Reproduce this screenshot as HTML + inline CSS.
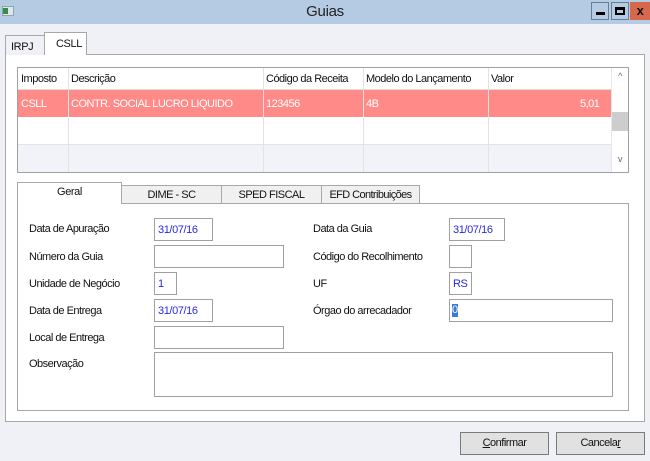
<!DOCTYPE html>
<html><head><meta charset="utf-8"><style>
*{margin:0;padding:0;box-sizing:border-box}
body{width:650px;height:461px;overflow:hidden;background:#f0f1f7;font-family:"Liberation Sans",sans-serif;font-size:11px;color:#111;position:relative;letter-spacing:-0.4px}
.a{position:absolute}
.box{position:absolute;background:#fff;border:1px solid #a0a0a0}
.lbl{position:absolute;font-size:11px;letter-spacing:-0.5px}
.val{color:#2a2ae0;padding-left:3px;padding-top:1px;line-height:21px;font-size:11px}
.col{position:absolute;top:0;bottom:0;border-left:1px solid #e3e3e3}
</style></head><body>
<div class="a" style="left:0;top:0;width:650px;height:24px;background:#b5cbe4"></div>
<div class="a" style="left:2px;top:6px;width:12px;height:10px;background:#dfe7ee;border:1px solid #8aa"></div>
<div class="a" style="left:3px;top:8px;width:5px;height:6px;background:#3a8a4a"></div>
<div class="a" style="left:0;top:3px;width:650px;text-align:center;font-size:15px;color:#222;letter-spacing:-0.3px">Guias</div>
<div class="a" style="left:591px;top:2px;width:18px;height:18px;background:#b5cbe4;border:1px solid #6a7e98"><div class="a" style="left:4px;top:9px;width:9px;height:3px;background:#000"></div></div>
<div class="a" style="left:611px;top:2px;width:18px;height:18px;background:#b5cbe4;border:1px solid #6a7e98"><div class="a" style="left:3px;top:4px;width:10px;height:8px;border:2px solid #000;border-top-width:3px"></div></div>
<div class="a" style="left:630px;top:2px;width:20px;height:18px;background:#d6684e;text-align:center;font-weight:bold;font-size:13px;line-height:17px">x</div>

<div class="a" style="left:5px;top:54px;width:640px;height:368px;border:1px solid #a8a8a8;background:#fff"></div>
<div class="a" style="left:5px;top:35px;width:40px;height:20px;border:1px solid #a8a8a8;border-bottom:none;background:#f0f1f7;padding:5px 0 0 5px">IRPJ</div>
<div class="a" style="left:44px;top:32px;width:43px;height:23px;border:1px solid #a8a8a8;border-bottom:none;background:#fff;padding:5px 0 0 11px">CSLL</div>

<div class="a" style="left:17px;top:67px;width:612px;height:106px;border:1px solid #a0a0a0;background:#fff;overflow:hidden">
 <div class="a" style="left:0;top:0;width:593px;height:22px;background:#fff;border-bottom:1px solid #ddd"></div>
 <div class="a" style="left:0;top:22px;width:593px;height:27px;background:#ff8a88"></div>
 <div class="a" style="left:0;top:49px;width:593px;height:28px;border-bottom:1px solid #e3e3e3"></div>
 <div class="a" style="left:0;top:77px;width:593px;height:28px;background:#f2f3f8"></div>
 <div class="col" style="left:50px"></div><div class="col" style="left:245px"></div><div class="col" style="left:345px"></div><div class="col" style="left:470px"></div>
 <div class="lbl" style="left:3px;top:5px">Imposto</div>
 <div class="lbl" style="left:53px;top:5px">Descrição</div>
 <div class="lbl" style="left:248px;top:5px">Código da Receita</div>
 <div class="lbl" style="left:348px;top:5px">Modelo do Lançamento</div>
 <div class="lbl" style="left:473px;top:5px">Valor</div>
 <div class="lbl" style="left:3px;top:30px;color:#fff">CSLL</div>
 <div class="lbl" style="left:53px;top:30px;color:#fff">CONTR. SOCIAL LUCRO LIQUIDO</div>
 <div class="lbl" style="left:248px;top:30px;color:#fff">123456</div>
 <div class="lbl" style="left:348px;top:30px;color:#fff">4B</div>
 <div class="lbl" style="left:562px;top:30px;color:#fff">5,01</div>
 <div class="a" style="left:593px;top:0;width:17px;height:104px;background:#fff;border-left:1px solid #e6e6e6"></div>
 <div class="a" style="left:594px;top:3px;width:16px;text-align:center;font-size:9px;color:#666">^</div>
 <div class="a" style="left:594px;top:44px;width:16px;height:19px;background:#cdcdcd"></div>
 <div class="a" style="left:594px;top:86px;width:16px;text-align:center;font-size:9px;color:#666">v</div>
</div>

<div class="a" style="left:17px;top:203px;width:612px;height:208px;border:1px solid #a8a8a8;background:#fff"></div>
<div class="a" style="left:121px;top:185px;width:101px;height:19px;border:1px solid #a8a8a8;background:#f0f0f0;text-align:center;padding-top:3px;letter-spacing:-0.5px">DIME - SC</div>
<div class="a" style="left:221px;top:185px;width:101px;height:19px;border:1px solid #a8a8a8;background:#f0f0f0;text-align:center;padding-top:3px;letter-spacing:-0.5px">SPED FISCAL</div>
<div class="a" style="left:321px;top:185px;width:99px;height:19px;border:1px solid #a8a8a8;background:#f0f0f0;text-align:center;padding-top:3px;letter-spacing:-0.6px">EFD Contribuições</div>
<div class="a" style="left:17px;top:182px;width:105px;height:22px;border:1px solid #a8a8a8;border-bottom:none;background:#fff;text-align:center;padding-top:3px">Geral</div>

<div class="lbl" style="left:29px;top:223px">Data de Apuração</div>
<div class="lbl" style="left:29px;top:251px">Número da Guia</div>
<div class="lbl" style="left:29px;top:278px">Unidade de Negócio</div>
<div class="lbl" style="left:29px;top:305px">Data de Entrega</div>
<div class="lbl" style="left:29px;top:332px">Local de Entrega</div>
<div class="lbl" style="left:29px;top:358px">Observação</div>
<div class="box val" style="left:154px;top:218px;width:59px;height:23px">31/07/16</div>
<div class="box" style="left:154px;top:245px;width:130px;height:23px"></div>
<div class="box val" style="left:154px;top:272px;width:23px;height:23px">1</div>
<div class="box val" style="left:154px;top:299px;width:59px;height:23px">31/07/16</div>
<div class="box" style="left:154px;top:326px;width:130px;height:23px"></div>
<div class="box" style="left:154px;top:352px;width:459px;height:45px"></div>

<div class="lbl" style="left:313px;top:223px">Data da Guia</div>
<div class="lbl" style="left:313px;top:251px">Código do Recolhimento</div>
<div class="lbl" style="left:313px;top:278px">UF</div>
<div class="lbl" style="left:313px;top:305px">Órgao do arrecadador</div>
<div class="box val" style="left:449px;top:218px;width:56px;height:23px">31/07/16</div>
<div class="box" style="left:449px;top:245px;width:23px;height:23px"></div>
<div class="box val" style="left:449px;top:272px;width:23px;height:23px">RS</div>
<div class="box" style="left:449px;top:299px;width:164px;height:23px"><span class="a" style="left:2px;top:4px;background:#3a7bd5;color:#fff;font-size:11px;line-height:13px">0</span></div>

<div class="a" style="left:460px;top:432px;width:89px;height:23px;border:1px solid #7a7a7a;background:#e1e1e1;text-align:center;line-height:21px;letter-spacing:-0.5px"><u>C</u>onfirmar</div>
<div class="a" style="left:556px;top:432px;width:89px;height:23px;border:1px solid #7a7a7a;background:#e1e1e1;text-align:center;line-height:21px;letter-spacing:-0.5px">Cancela<u>r</u></div>
</body></html>
